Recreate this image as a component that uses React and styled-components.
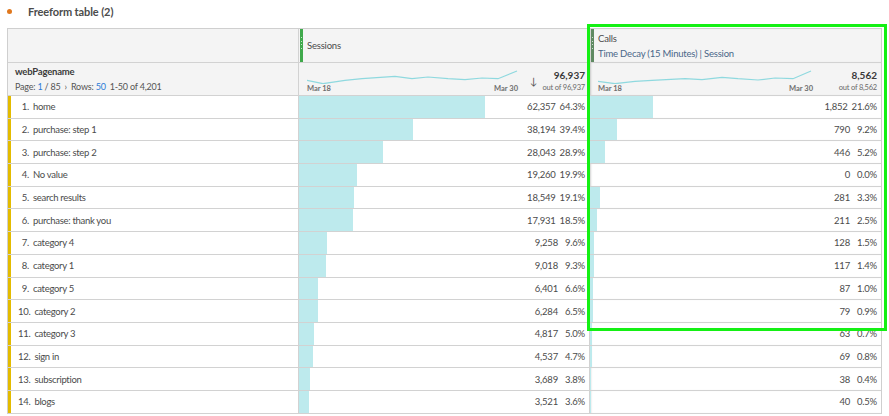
import React from 'react';
import styled, { createGlobalStyle } from 'styled-components';

const GlobalStyle = createGlobalStyle`
  body {
    margin: 0;
    background: #fff;
    font-family: Lato, "Open Sans", sans-serif;
    color: #4b4b4b;
  }
`;

const rows = [
  ['home', '62,357', 64.3, '1,852', 21.6],
  ['purchase: step 1', '38,194', 39.4, '790', 9.2],
  ['purchase: step 2', '28,043', 28.9, '446', 5.2],
  ['No value', '19,260', 19.9, '0', 0.0],
  ['search results', '18,549', 19.1, '281', 3.3],
  ['purchase: thank you', '17,931', 18.5, '211', 2.5],
  ['category 4', '9,258', 9.6, '128', 1.5],
  ['category 1', '9,018', 9.3, '117', 1.4],
  ['category 5', '6,401', 6.6, '87', 1.0],
  ['category 2', '6,284', 6.5, '79', 0.9],
  ['category 3', '4,817', 5.0, '63', 0.7],
  ['sign in', '4,537', 4.7, '69', 0.8],
  ['subscription', '3,689', 3.8, '38', 0.4],
  ['blogs', '3,521', 3.6, '40', 0.5],
];

const Page = styled.div`
  position: relative;
  width: 889px;
  height: 416px;
  overflow: hidden;
`;

const Title = styled.div`
  display: flex;
  align-items: center;
  height: 23px;
  padding-left: 7px;
  font-size: 11px;
  font-weight: 700;
  letter-spacing: -0.1px;
  color: #4b4b4b;
`;

const Dot = styled.span`
  width: 5px;
  height: 5px;
  border-radius: 50%;
  background: #e0781e;
  margin-right: 16px;
`;

const Table = styled.div`
  margin: 5px 0 0 7px;
  width: 875px;
  border: 1px solid #cfcfcf;
  border-bottom: none;
  box-sizing: border-box;
`;

const Row = styled.div`
  display: grid;
  grid-template-columns: 291px 291px 1fr;
  height: ${p => p.h}px;
  background: ${p => (p.head ? '#f4f4f4' : '#fff')};
  border-bottom: 1px solid #d2d2d2;
  box-sizing: border-box;
`;

const Cell = styled.div`
  position: relative;
  display: flex;
  align-items: center;
  border-right: ${p => (p.last ? 'none' : '1px solid #d2d2d2')};
  ${p => p.calls && 'box-shadow: inset 2px 0 2px -1px rgba(0,0,0,0.18);'}
  min-width: 0;
  white-space: nowrap;
`;

const LabelCell = styled(Cell)`
  border-left: 3px solid #e3bb00;
  padding-left: 7px;
  font-size: 9.5px;
  letter-spacing: -0.3px;
  color: #4b4b4b;
`;

const Index = styled.span`
  display: inline-block;
  min-width: 11px;
  text-align: right;
  margin-right: 4px;
`;

const Bar = styled.div`
  position: absolute;
  left: 0;
  top: 0;
  bottom: 0;
  background: #bdeaed;
`;

const Values = styled.div`
  position: relative;
  margin-left: auto;
  display: flex;
  padding-right: 4px;
  font-size: 9.5px;
  letter-spacing: -0.2px;
  color: #4b4b4b;
`;

const Pct = styled.span`
  min-width: 23px;
  margin-left: 4px;
  text-align: right;
`;

const Grip = styled.div`
  align-self: stretch;
  width: 3px;
  margin: 0 4px 0 1px;
  background: ${p => p.color};
  display: flex;
  flex-direction: column;
  justify-content: center;
  gap: 2px;
  padding-bottom: 6px;
  box-sizing: border-box;
  &::before, &::after {
    content: '';
    height: 3px;
    margin: 0 1px;
    border-top: 1px dotted rgba(255,255,255,0.7);
    border-bottom: 1px dotted rgba(255,255,255,0.7);
  }
`;

const HeadText = styled.div`
  display: flex;
  flex-direction: column;
  justify-content: center;
  gap: 4px;
  font-size: 9.5px;
  letter-spacing: -0.2px;
  color: #4b4b4b;
`;

const Sub = styled.span`
  color: #4a6789;
`;

const DimCell = styled(Cell)`
  flex-direction: column;
  align-items: flex-start;
  justify-content: center;
  gap: 4px;
  padding-left: 7px;
  font-size: 9.5px;
  letter-spacing: -0.2px;
`;

const DimName = styled.div`
  font-weight: 700;
  color: #3a3a3a;
`;

const Pager = styled.div`
  display: flex;
  gap: 4px;
  color: #555;
  font-size: 9px;
`;

const Blue = styled.span`
  color: #2c7bd6;
`;

const Summary = styled(Cell)`
  padding: 0 4px 0 8px;
`;

const Spark = styled.div`
  display: flex;
  flex-direction: column;
  flex-shrink: 0;
  width: ${p => p.w}px;
  margin-top: 4px;
`;

const Dates = styled.div`
  display: flex;
  justify-content: space-between;
  font-size: 7.5px;
  font-weight: 700;
  color: #6e6e6e;
`;

const Totals = styled.div`
  margin-left: auto;
  display: flex;
  flex-direction: column;
  align-items: flex-end;
  gap: 2px;
  padding-top: 2px;
`;

const Big = styled.span`
  font-size: 10px;
  font-weight: 700;
  color: #3a3a3a;
`;

const Small = styled.span`
  font-size: 7.5px;
  letter-spacing: -0.2px;
  color: #6a6a6a;
`;

const Arrow = styled.span`
  font-size: 10px;
  color: #555;
  margin-left: 12px;
  margin-top: 4px;
`;

const Highlight = styled.div`
  position: absolute;
  left: 587px;
  top: 24px;
  width: 300px;
  height: 307px;
  border: 3px solid #14f014;
  box-sizing: border-box;
  pointer-events: none;
`;

const sessionsLine = '0,9.3 16,12.7 38,9.3 55,7.7 88,5.3 105,7.7 121,6 141,7.7 158,8.7 175,7 191,7.7 210,0';
const callsLine = '0,10.3 17,12.7 37,10.3 54,9.3 87,7.7 104,8.7 124,6.3 140,7.7 160,9 177,7 195,7.7 213,0';

function Sparkline({ w, points }) {
  return (
    <Spark w={w}>
      <svg width={w} height="14" viewBox={`0 -1 ${w} 14`}>
        <polyline points={points} fill="none" stroke="#8fd9df" strokeWidth="1.2" />
      </svg>
      <Dates><span>Mar 18</span><span>Mar 30</span></Dates>
    </Spark>
  );
}

function Metric({ value, pct, calls, last }) {
  return (
    <Cell calls={calls} last={last}>
      <Bar style={{ width: `${pct}%` }} />
      <Values>
        <span>{value}</span>
        <Pct>{pct.toFixed(1)}%</Pct>
      </Values>
    </Cell>
  );
}

export default function App() {
  return (
    <Page>
      <GlobalStyle />
      <Title><Dot />Freeform table (2)</Title>
      <Table>
        <Row head h={34}>
          <Cell />
          <Cell>
            <Grip color="#3fa94b" />
            <HeadText>Sessions</HeadText>
          </Cell>
          <Cell calls last>
            <Grip color="#5f8a62" />
            <HeadText>
              <span>Calls</span>
              <Sub>Time Decay (15 Minutes) | Session</Sub>
            </HeadText>
          </Cell>
        </Row>
        <Row head h={33}>
          <DimCell>
            <DimName>webPagename</DimName>
            <Pager>
              <span>Page: <Blue>1</Blue> / 85</span>
              <span>›</span>
              <span>Rows: <Blue>50</Blue></span>
              <span>1-50 of 4,201</span>
            </Pager>
          </DimCell>
          <Summary>
            <Sparkline w={211} points={sessionsLine} />
            <Arrow>↓</Arrow>
            <Totals>
              <Big>96,937</Big>
              <Small>out of 96,937</Small>
            </Totals>
          </Summary>
          <Summary calls last>
            <Sparkline w={215} points={callsLine} />
            <Totals>
              <Big>8,562</Big>
              <Small>out of 8,562</Small>
            </Totals>
          </Summary>
        </Row>
        {rows.map(([name, s, sp, c, cp], i) => (
          <Row key={name} h={22.7}>
            <LabelCell>
              <Index>{i + 1}.</Index>{name}
            </LabelCell>
            <Metric value={s} pct={sp} />
            <Metric value={c} pct={cp} calls last />
          </Row>
        ))}
      </Table>
      <Highlight />
    </Page>
  );
}
